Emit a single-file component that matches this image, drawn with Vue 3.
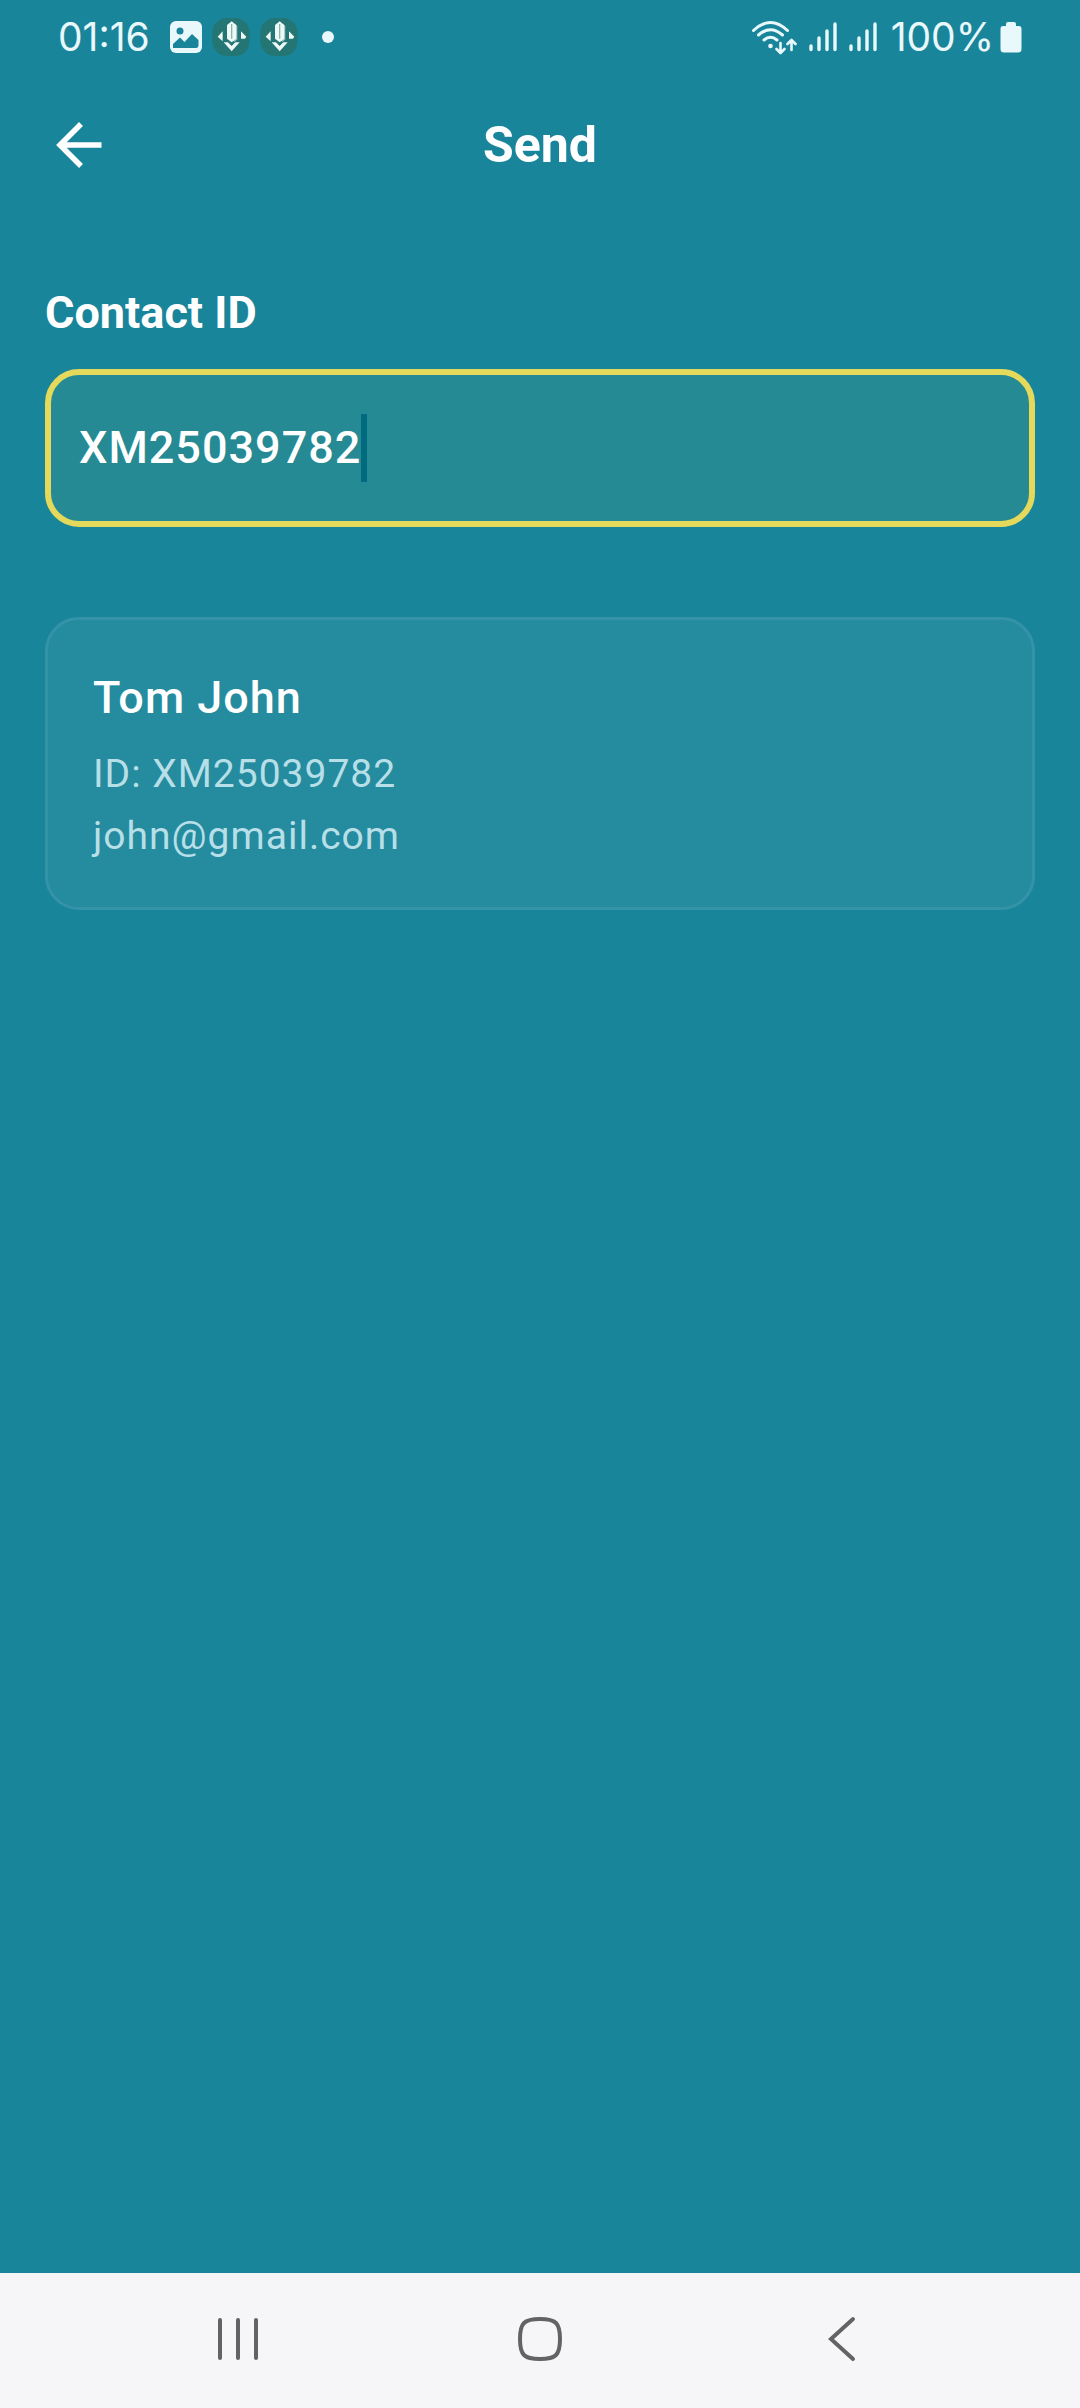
<script setup>
import { ref } from 'vue'

const contactId = ref('XM25039782')
const contact = { name: 'Tom John', id: 'XM25039782', email: 'john@gmail.com' }
</script>

<template>
  <div class="screen">
    <header class="status">
      <div class="status-side">
        <span class="status-text clock">01:16</span>
        <svg class="photo" width="32" height="32" viewBox="0 0 32 32" aria-hidden="true">
          <rect width="32" height="32" rx="6" fill="#e9f8fb" />
          <circle cx="10" cy="10" r="3.5" fill="#19859b" />
          <path d="M3 27V23L10 16.500L14.500 21L22 13L28.500 19V24Q28.500 27 26 27Z" fill="#19859b" />
        </svg>
        <svg v-for="n in 2" :key="n" class="badge" width="38" height="38" viewBox="39 24 114 114" aria-hidden="true">
          <rect x="40" y="24" width="112" height="114" rx="44" fill="#237673" />
          <path d="M102 40L115 48V88L107 96L102 92Z" fill="#8db5b0" />
          <path d="M84 45L98 34L112 45V86L98 97L84 86Z" fill="#eef8f6" />
          <path d="M98 42V86" stroke="#8db5b0" stroke-width="4" />
          <path d="M56 80L71 64V94ZM142 80L126 64V86H138ZM74 97H87L98 108L109 97H122L98 124Z" fill="#eef8f6" />
        </svg>
        <svg class="dot" width="12" height="12" viewBox="0 0 12 12" aria-hidden="true">
          <circle cx="6" cy="6" r="6" fill="#e9f8fb" />
        </svg>
      </div>
      <div class="status-side">
        <svg width="46" height="36" viewBox="0 0 46 36" fill="none" stroke="#e9f8fb" stroke-width="3" stroke-linecap="round" stroke-linejoin="round" aria-hidden="true">
          <path d="M2.500 11.500Q19.500-4.500 36.500 11.500M7.500 16Q19.500 5.500 31.500 16M13 21Q19.500 15.500 26 21" />
          <circle cx="19.500" cy="27" r="2.300" fill="#e9f8fb" stroke="none" />
          <path d="M29.500 24V33M25.500 30L29.500 34L33.500 30M40.500 31V21.500M36.500 25L40.500 21L44.500 25" stroke-width="2.600" />
        </svg>
        <svg v-for="n in 2" :key="n" class="signal" width="28" height="30" viewBox="0 0 28 30" stroke="#e9f8fb" stroke-width="3.400" stroke-linecap="round" aria-hidden="true">
          <path d="M2 24V27.500M10 16V27.500M18 9V27.500M26 2V27.500" />
        </svg>
        <span class="status-text percent">100%</span>
        <svg class="battery" width="22" height="32" viewBox="0 0 22 32" aria-hidden="true">
          <path d="M6 3Q6 1 8 1H14Q16 1 16 3V5H19Q21.500 5 21.500 8V28Q21.500 31.500 18 31.500H4Q.5 31.500 .5 28V8Q.5 5 3 5H6Z" fill="#e9f8fb" />
        </svg>
      </div>
    </header>

    <nav class="appbar">
      <button class="back" type="button" aria-label="Back">
        <svg width="46" height="46" viewBox="0 0 46 46" fill="none" stroke="#fff" stroke-width="5.500" aria-hidden="true">
          <path d="M45.500 23H4M25 2L4 23L25 44" />
        </svg>
      </button>
      <h1 class="title">Send</h1>
    </nav>

    <main class="content">
      <label class="label" for="contact-id">Contact ID</label>
      <div class="field">
        <input id="contact-id" v-model="contactId" class="input" type="text" autocomplete="off" spellcheck="false" />
        <span class="caret"></span>
      </div>

      <section class="card">
        <h2 class="name">{{ contact.name }}</h2>
        <p class="detail">ID: {{ contact.id }}</p>
        <p class="detail">{{ contact.email }}</p>
      </section>
    </main>

    <footer class="system">
      <button class="key" type="button" aria-label="Recent apps">
        <svg width="44" height="46" viewBox="0 0 44 46" stroke="#636363" stroke-width="4" stroke-linecap="round" aria-hidden="true">
          <path d="M4 4V42M22 4V42M40 4V42" />
        </svg>
      </button>
      <button class="key" type="button" aria-label="Home">
        <svg width="46" height="46" viewBox="0 0 46 46" fill="none" stroke="#636363" stroke-width="4" aria-hidden="true">
          <path d="M23 3C39 3 43 7 43 23S39 43 23 43S3 39 3 23S7 3 23 3Z" />
        </svg>
      </button>
      <button class="key" type="button" aria-label="Go back">
        <svg width="46" height="46" viewBox="0 0 46 46" fill="none" stroke="#636363" stroke-width="4" stroke-linecap="round" aria-hidden="true">
          <path d="M34 3L12 23L34 43" />
        </svg>
      </button>
    </footer>
  </div>
</template>

<style>
body {
  margin: 0;
  background: #19859b;
}
</style>

<style scoped>
.screen {
  display: flex;
  flex-direction: column;
  min-height: 100vh;
  background: #19859b;
  color: #fff;
  font-family: Roboto, sans-serif;
}

button {
  display: flex;
  align-items: center;
  justify-content: center;
  padding: 0;
  border: 0;
  background: none;
}

.status {
  display: flex;
  justify-content: space-between;
  height: 74px;
  padding: 0 58px;
}

.status-side {
  display: flex;
  align-items: center;
}

.status-text {
  color: #e9f8fb;
  font-family: Inter, sans-serif;
  font-size: 39px;
  font-weight: 400;
  line-height: 48px;
}

.photo {
  margin-left: 20px;
}

.badge {
  margin-left: 10px;
}

.dot {
  margin-left: 24px;
}

.signal {
  margin-left: 12px;
}

.percent {
  margin-left: 14px;
}

.battery {
  margin-left: 6px;
}

.appbar {
  display: grid;
  grid-template-columns: 1fr auto 1fr;
  align-items: center;
  height: 142px;
  padding: 0 56px;
}

.back {
  justify-self: start;
}

.title {
  margin: 0;
  font-size: 50px;
  font-weight: 700;
  line-height: 60px;
}

.content {
  display: flex;
  flex: 1;
  flex-direction: column;
  padding: 69px 45px;
}

.label {
  font-size: 45px;
  font-weight: 700;
  line-height: 56px;
}

.field {
  display: flex;
  align-items: center;
  height: 146px;
  margin-top: 28px;
  padding: 0 28px;
  border: 6px solid #e4d95b;
  border-radius: 34px;
  background: #258a94;
}

.input {
  field-sizing: content;
  padding: 0;
  border: 0;
  outline: 0;
  background: none;
  color: #fff;
  font-family: inherit;
  font-size: 45px;
  font-weight: 500;
  line-height: 68px;
  letter-spacing: 1px;
}

.caret {
  width: 6px;
  height: 68px;
  background: #006b7e;
}

.card {
  display: flex;
  flex-direction: column;
  gap: 6px;
  margin-top: 90px;
  padding: 44px 45px 43px;
  border: 3px solid #3593a8;
  border-radius: 34px;
  background: #258b9f;
}

.name {
  margin: 0 0 8px;
  font-size: 45px;
  font-weight: 500;
  line-height: 68px;
  letter-spacing: 1px;
}

.detail {
  margin: 0;
  color: #b7dfe7;
  font-size: 39px;
  font-weight: 400;
  line-height: 56px;
  letter-spacing: 1px;
}

.system {
  display: flex;
  align-items: center;
  justify-content: center;
  height: 131px;
  padding-bottom: 4px;
  background: #f6f6f8;
}

.key {
  width: 28%;
  height: 100%;
}
</style>
